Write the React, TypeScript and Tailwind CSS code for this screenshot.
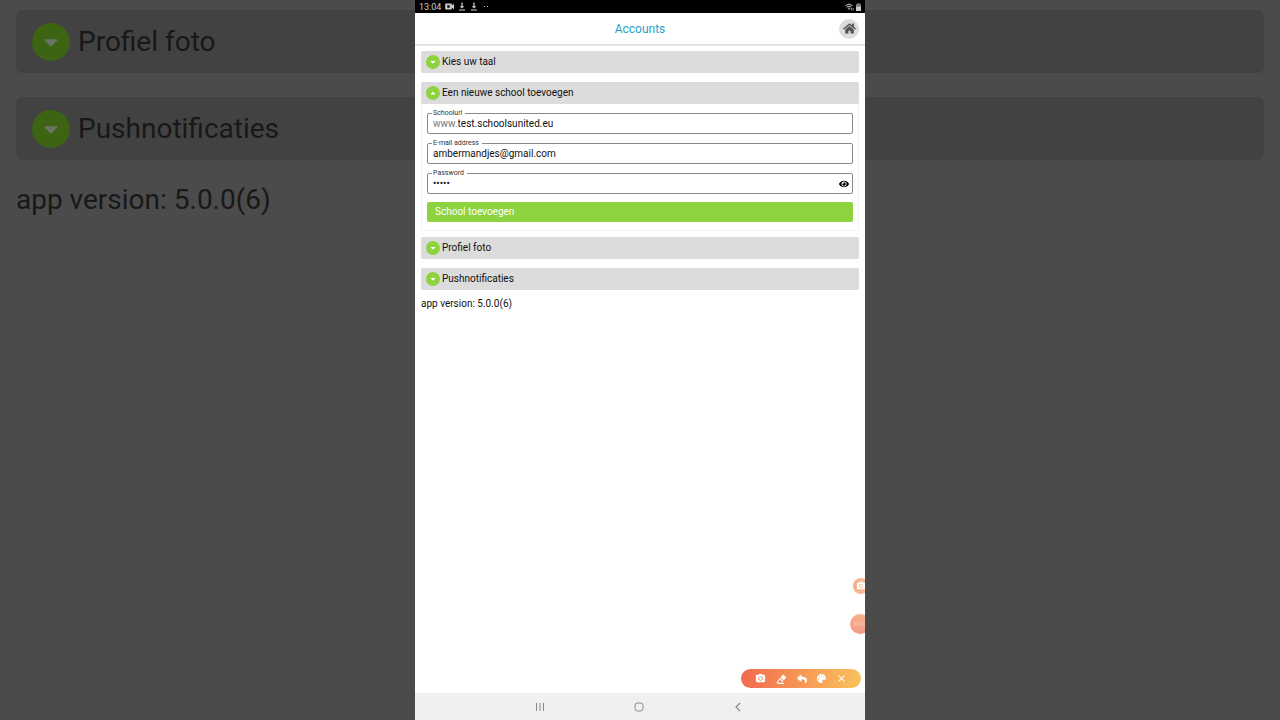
import React, { useState } from "react";
import {
  FaCaretDown,
  FaCaretUp,
  FaEraser,
  FaEye,
  FaHome,
  FaPalette,
  FaReply,
} from "react-icons/fa";
import { MdCameraAlt, MdClose } from "react-icons/md";

interface SectionHeaderProps {
  title: string;
  open?: boolean;
  onToggle?: () => void;
}

const SectionHeader: React.FC<SectionHeaderProps> = ({
  title,
  open = false,
  onToggle,
}) => (
  <button
    type="button"
    aria-expanded={open}
    onClick={onToggle}
    className="flex h-[22px] w-full items-center gap-0.5 rounded-xs bg-[#dcdcdc] pl-[5px] text-left"
  >
    <span className="flex size-3.5 items-center justify-center rounded-full bg-[#8dd33f] text-white">
      {open ? <FaCaretUp size={8} /> : <FaCaretDown size={8} />}
    </span>
    {title}
  </button>
);

interface FieldProps {
  id: string;
  label: string;
  type?: string;
  value: string;
  prefix?: string;
  onChange: (value: string) => void;
  children?: React.ReactNode;
}

const Field: React.FC<FieldProps> = ({
  id,
  label,
  type = "text",
  value,
  prefix,
  onChange,
  children,
}) => (
  <fieldset className="h-[26px] min-w-0 rounded-xs border border-[#8a8a8a] pr-0.5 pl-1">
    <legend className="flex h-2.5 items-center px-px text-[7px] leading-[10px] text-[#333]">
      <label htmlFor={id} className="pr-0.5">
        {label}
      </label>
    </legend>
    <div className="flex h-3 items-center px-px">
      {prefix && <span className="text-[#777]">{prefix}</span>}
      <input
        id={id}
        type={type}
        value={value}
        onChange={(e) => onChange(e.target.value)}
        className="h-3.5 min-w-0 flex-1 bg-transparent outline-none"
      />
      {children}
    </div>
  </fieldset>
);

const BackdropRow: React.FC<{ title: string }> = ({ title }) => (
  <div className="flex h-[63px] items-center gap-2 rounded-md bg-[#424242] pl-4">
    <span className="flex size-[38px] items-center justify-center rounded-full bg-[#3c6412] text-[#6c7468]">
      <FaCaretDown size={22} />
    </span>
    {title}
  </div>
);

const Backdrop = () => (
  <div
    aria-hidden="true"
    className="absolute inset-0 flex flex-col gap-6 overflow-hidden px-4 pt-[10px] text-[28px] text-[#181818]"
  >
    <BackdropRow title="Profiel foto" />
    <BackdropRow title="Pushnotificaties" />
    <p className="leading-8">app version: 5.0.0(6)</p>
  </div>
);

const DownloadIcon = () => (
  <svg width="8" height="9" viewBox="0 0 8 9" fill="currentColor">
    <path d="M3.4 0.5h1.2v3.7h1.7L4 6.6 1.7 4.2h1.7zM1 7.6h6v1H1z" />
  </svg>
);

const StatusBar = () => (
  <div className="flex h-[13px] items-center justify-between bg-black px-1 text-[#ccc]">
    <div className="flex items-center gap-1">
      <span className="text-[9px]">13:04</span>
      <svg width="9" height="7" viewBox="0 0 9 7" fill="currentColor">
        <path
          fillRule="evenodd"
          d="M0.8 0.5h5.4q.6 0 .6.6v1.4L9 .8v5.4L6.8 4.5v1.4q0 .6-.6.6H.8q-.6 0-.6-.6V1.100q0-.6.6-.6zM2.300 2.200v2.600h2.400V2.200z"
        />
      </svg>
      <DownloadIcon />
      <DownloadIcon />
      <span className="ml-0.5 flex gap-0.5">
        <i className="size-px bg-[#ccc]" />
        <i className="size-px bg-[#ccc]" />
      </span>
    </div>
    <div className="flex items-center gap-0.5">
      <svg width="9" height="8" viewBox="0 0 9 8" fill="none" stroke="currentColor">
        <path d="M0.500 2.500Q4 -.3 7.500 2.500M1.800 4.100Q4 2.300 6.200 4.100" />
        <path d="M3 5.200h2L4 6.600zM6.500 5v2.500M8.200 5v2.500" strokeWidth=".7" />
      </svg>
      <svg width="5" height="8" viewBox="0 0 5 8">
        <path d="M1.500 0h2v1H5v3H0V1h1.500z" fill="#777" />
        <path d="M0 3.500h5V8H0z" fill="currentColor" />
      </svg>
    </div>
  </div>
);

const RecorderTools = () => (
  <div className="absolute right-1 bottom-8 flex h-[19px] w-[120px] items-center justify-between rounded-full bg-linear-to-r from-[#f2694f] to-[#f8c25c] px-[14px] text-white">
    <button type="button" aria-label="Screenshot">
      <MdCameraAlt size={11} />
    </button>
    <button type="button" aria-label="Eraser">
      <svg width="11" height="10" viewBox="0 0 11 10" fill="currentColor">
        <path d="M7 .4l3.400 2.800-2.600 3.100-3.400-2.800z" />
        <path
          fillRule="evenodd"
          d="M3.900 4.100l3.400 2.800L5.600 9H8v.9H2.200L.500 8.400zM3.900 5.500L2 7.900l1.300 1h1.200L6 7.200z"
        />
      </svg>
    </button>
    <button type="button" aria-label="Undo">
      <FaReply size={10} />
    </button>
    <button type="button" aria-label="Colours">
      <FaPalette size={9} />
    </button>
    <button type="button" aria-label="Close">
      <MdClose size={11} />
    </button>
  </div>
);

const NavigationBar = () => (
  <nav className="flex h-[27px] items-center justify-between bg-[#f0f0f0] pr-[122px] pl-[120px] text-[#888]">
    <button type="button" aria-label="Recent apps">
      <svg width="10" height="10" viewBox="0 0 10 10" stroke="currentColor">
        <path d="M1.500 1v8M5 1v8M8.500 1v8" />
      </svg>
    </button>
    <button type="button" aria-label="Home">
      <svg width="10" height="10" viewBox="0 0 10 10" fill="none" stroke="currentColor">
        <rect x="1" y="1" width="8" height="8" rx="2.500" />
      </svg>
    </button>
    <button type="button" aria-label="Back">
      <svg width="10" height="10" viewBox="0 0 10 10" fill="none" stroke="currentColor">
        <path d="M7 1L3 5l4 4" strokeWidth="1.200" />
      </svg>
    </button>
  </nav>
);

export default function App() {
  const [open, setOpen] = useState(true);
  const [showPassword, setShowPassword] = useState(false);
  const [url, setUrl] = useState("test.schoolsunited.eu");
  const [email, setEmail] = useState("ambermandjes@gmail.com");
  const [password, setPassword] = useState("12345");

  return (
    <div className="relative flex min-h-screen justify-center bg-[#4b4b4b] font-[Roboto,sans-serif]">
      <Backdrop />
      <div className="relative flex w-full max-w-[450px] flex-col overflow-hidden bg-white text-[10px] leading-[14px] text-[#111]">
        <StatusBar />
        <header className="grid h-[33px] grid-cols-[1fr_auto_1fr] items-center border-b-2 border-[#e2e4e6] px-1.5">
          <h1 className="col-start-2 text-[12px] text-[#2b9fc9]">Accounts</h1>
          <button
            type="button"
            aria-label="Home"
            className="flex size-5 items-center justify-center justify-self-end rounded-full bg-[#dcdcdc] text-[#555]"
          >
            <FaHome size={13} />
          </button>
        </header>

        <main className="flex flex-1 flex-col px-1.5 pt-[5px]">
          <SectionHeader title="Kies uw taal" />
          <div className="mt-[9px]">
            <SectionHeader
              title="Een nieuwe school toevoegen"
              open={open}
              onToggle={() => setOpen(!open)}
            />
            {open && (
              <form
                onSubmit={(e) => e.preventDefault()}
                className="flex flex-col gap-1 border border-t-0 border-[#f2f2f2] px-[5px] pt-1 pb-2"
              >
                <Field
                  id="school-url"
                  label="Schoolurl"
                  prefix="www."
                  value={url}
                  onChange={setUrl}
                />
                <Field
                  id="email"
                  label="E-mail address"
                  value={email}
                  onChange={setEmail}
                />
                <Field
                  id="password"
                  label="Password"
                  type={showPassword ? "text" : "password"}
                  value={password}
                  onChange={setPassword}
                >
                  <button
                    type="button"
                    aria-label="Show password"
                    onClick={() => setShowPassword(!showPassword)}
                  >
                    <FaEye size={10} className="text-black" />
                  </button>
                </Field>
                <button
                  type="submit"
                  className="mt-1 h-5 rounded-xs bg-[#8dd33f] px-2 text-left text-white"
                >
                  School toevoegen
                </button>
              </form>
            )}
          </div>
          <div className="mt-1.5 flex flex-col gap-[9px]">
            <SectionHeader title="Profiel foto" />
            <SectionHeader title="Pushnotificaties" />
          </div>
          <p className="mt-[7px]">app version: 5.0.0(6)</p>
        </main>

        <NavigationBar />
        <button
          type="button"
          aria-label="Camera"
          className="absolute -right-1 bottom-[126px] flex size-4 items-center justify-center rounded-full bg-linear-to-r from-[#f7a98a] to-[#fbc49b] text-white"
        >
          <MdCameraAlt size={10} />
        </button>
        <button
          type="button"
          className="absolute -right-[5px] bottom-[86px] flex size-5 items-center justify-center rounded-full bg-linear-to-b from-[#f9b08c] to-[#f59a86] text-[5px] text-[#fbd0bd]"
        >
          00:06
        </button>
        <RecorderTools />
      </div>
    </div>
  );
}
